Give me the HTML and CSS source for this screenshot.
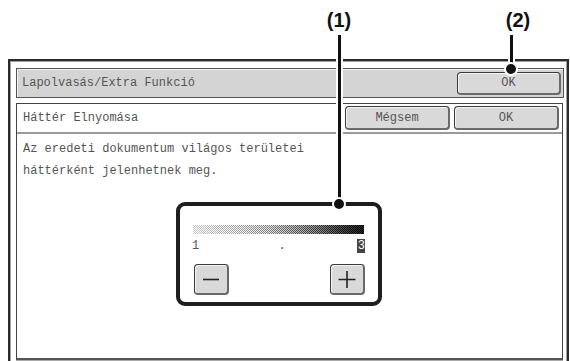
FILE: index.html
```html
<!DOCTYPE html>
<html>
  <head>
    <meta charset="UTF-8" />
    <meta name="viewport" content="width=device-width, initial-scale=1.0" />
    <title>Háttér Elnyomása</title>
    <link rel="stylesheet" href="styles.css">
  </head>
  <body>
    <div class="stage">
      <div class="screen">
        <div class="titlebar">
          <span>Lapolvasás/Extra Funkció</span>
          <button class="key key-title" type="button">OK</button>
        </div>
        <div class="panel">
          <div class="panel-head">
            <span>Háttér Elnyomása</span>
            <div class="head-keys">
              <button class="key" type="button">Mégsem</button>
              <button class="key" type="button">OK</button>
            </div>
          </div>
          <p class="desc">Az eredeti dokumentum világos területei<br />háttérként jelenhetnek meg.</p>
          <div class="adjust">
            <div class="bar"></div>
            <div class="scale">
              <span>1</span>
              <span class="mid">.</span>
              <span class="sel">3</span>
            </div>
            <div class="steps">
              <button class="key step" type="button" aria-label="minus">
                <svg width="20" height="20" viewBox="0 0 20 20"><path d="M2 10.5h16" stroke="#222" stroke-width="1.6" /></svg>
              </button>
              <button class="key step" type="button" aria-label="plus">
                <svg width="20" height="20" viewBox="0 0 20 20"><path d="M1.5 10.5h17M10 2v17" stroke="#222" stroke-width="1.6" /></svg>
              </button>
            </div>
          </div>
        </div>
      </div>

      <div class="callout c1">
        <span class="num">(1)</span>
        <span class="leader"></span>
        <span class="dot"></span>
      </div>
      <div class="callout c2">
        <span class="num">(2)</span>
        <span class="leader"></span>
        <span class="dot"></span>
      </div>
    </div>
  </body>
</html>
```

FILE: styles.css
```css
body {
  margin: 0;
  background: #fff;
  font-family: "Liberation Mono", "DejaVu Sans Mono", monospace;
  font-size: 12px;
  color: #555;
}
.stage {
  position: relative;
  height: 361px;
  overflow: hidden;
  padding-top: 59px;
  box-sizing: border-box;
}
.screen {
  margin-left: 8px;
  width: 561px;
  height: 320px;
  box-sizing: border-box;
  border: 2px solid #2b2b2b;
  border-bottom: none;
  box-shadow: inset 1px 1px 0 #a0a0a0, inset -1px 0 0 #a0a0a0;
  padding: 7px 3px 0 6px;
}
.titlebar {
  display: flex;
  align-items: center;
  justify-content: space-between;
  height: 30px;
  box-sizing: border-box;
  border: 1px solid #555;
  background: #d4d4d4;
  box-shadow: inset 1px 1px 0 #f2f2f2;
  padding: 0 2px 0 5px;
}
.key {
  font-family: inherit;
  font-size: 12px;
  color: #555;
  background: #d9d9d9;
  border: 1px solid #3a3a3a;
  border-right: 2px solid #6a6a6a;
  border-bottom: 2px solid #6a6a6a;
  border-radius: 4px;
  box-shadow: inset 1px 1px 0 #f4f4f4;
  padding: 0;
  margin: 0;
}
.key-title {
  width: 104px;
  height: 23px;
}
.panel {
  margin-top: 5px;
  margin-right: 1px;
  height: 254px;
  border: 1px solid #444;
  border-bottom: 2px solid #555;
  box-shadow: 0 1px 0 #aaa;
  background: #fff;
}
.panel-head {
  display: flex;
  align-items: center;
  justify-content: space-between;
  height: 30px;
  box-sizing: border-box;
  border-bottom: 2px solid #9a9a9a;
  padding: 0 3px 0 6px;
}
.head-keys {
  display: flex;
  gap: 4px;
}
.head-keys .key {
  width: 105px;
  height: 24px;
}
.desc {
  margin: 4px 0 0 6px;
  line-height: 22px;
}
.adjust {
  margin: 20px 0 0 159px;
  width: 206px;
  height: 104px;
  box-sizing: border-box;
  border: 4px solid #1e1e1e;
  border-radius: 9px;
  padding: 19px 0 0 12px;
}
.bar {
  position: relative;
  margin-left: 1px;
  width: 171px;
  height: 9px;
  background: linear-gradient(90deg, #c8c8c8, #808080 45%, #111 85%, #000);
}
.bar:after {
  content: '';
  position: absolute;
  inset: 0;
  background: repeating-conic-gradient(#fff 0 25%, transparent 0 50%) 0 0 / 2px 2px;
  -webkit-mask-image: linear-gradient(90deg, #000 20%, rgba(0, 0, 0, 0.5) 70%, rgba(0, 0, 0, 0.15));
  mask-image: linear-gradient(90deg, #000 20%, rgba(0, 0, 0, 0.5) 70%, rgba(0, 0, 0, 0.15));
}
.scale {
  display: flex;
  justify-content: space-between;
  align-items: center;
  width: 173px;
  height: 14px;
  margin-top: 5px;
  line-height: 14px;
}
.scale .mid {
  margin-left: 8px;
}
.scale .sel {
  background: #444;
  color: #fff;
  padding: 0 0 0 1px;
}
.steps {
  display: flex;
  justify-content: space-between;
  width: 171px;
  margin: 11px 0 0 2px;
}
.step {
  display: flex;
  align-items: center;
  justify-content: center;
  width: 35px;
  height: 31px;
}
.callout {
  position: absolute;
  top: 9px;
  display: flex;
  flex-direction: column;
  align-items: center;
  width: 40px;
}
.c1 {
  left: 319px;
}
.c2 {
  left: 491px;
}
.num {
  font-family: "Liberation Sans", Arial, sans-serif;
  font-weight: bold;
  font-size: 20px;
  line-height: 23px;
  color: #111;
}
.c2 .num {
  margin-left: 14px;
}
.leader {
  width: 3px;
  margin-top: 3px;
  background: #111;
  box-shadow: 0 0 0 2px #fff;
}
.c1 .leader {
  height: 163px;
}
.c2 .leader {
  height: 28px;
}
.dot {
  width: 10px;
  height: 10px;
  border-radius: 50%;
  background: #111;
  border: 2px solid #fff;
  margin-top: -1px;
}
```
